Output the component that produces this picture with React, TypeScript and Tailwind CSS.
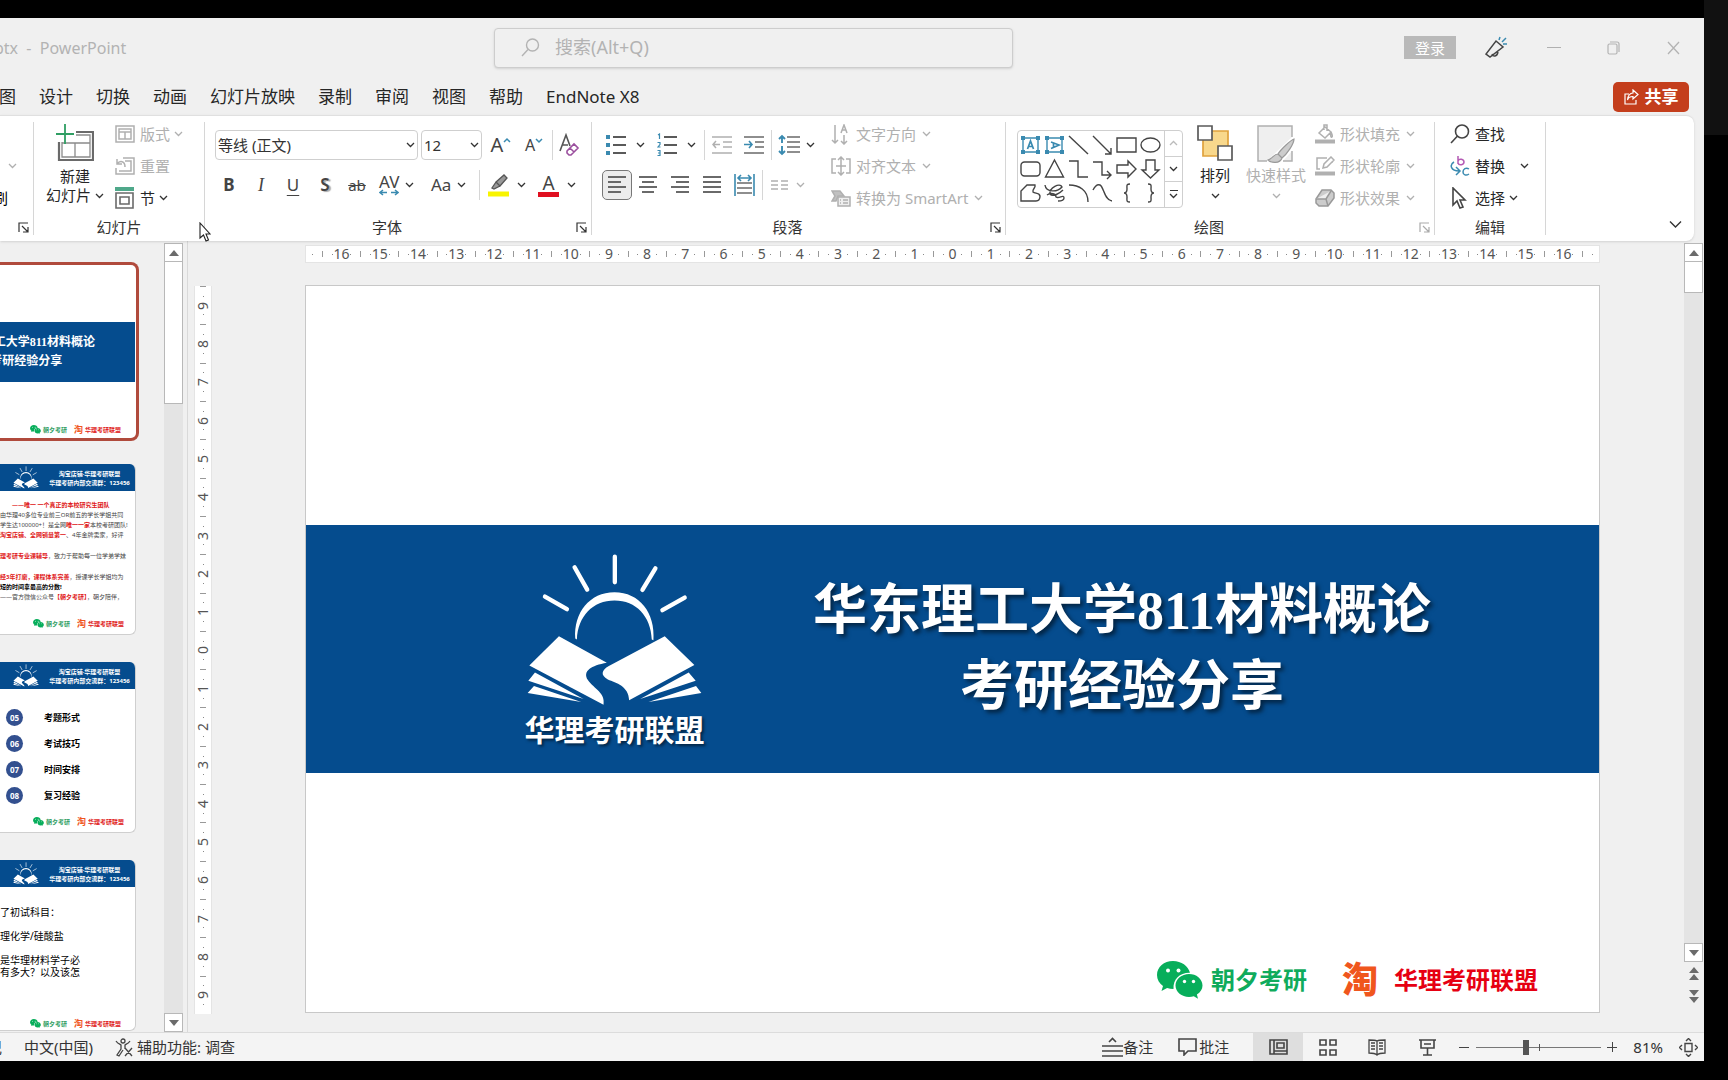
import React from "react";

const UI = "font-['Noto_Sans','Noto_Sans_CJK_SC',sans-serif]";

function Chev({ className = "text-[#333]" }: { className?: string }) {
  return (
    <svg width="9" height="6" viewBox="0 0 9 6" fill="none" stroke="currentColor" strokeWidth="1.3" className={"shrink-0 " + className} aria-hidden="true">
      <path d="M1 1l3.5 3.5L8 1" />
    </svg>
  );
}

function Launcher({ dim = false }: { dim?: boolean }) {
  return (
    <button aria-label="更多选项" className={dim ? "absolute bottom-2 right-1 text-[#aaa]" : "absolute bottom-2 right-1 text-[#333]"}>
      <svg width="11" height="11" viewBox="0 0 11 11" fill="none" stroke="currentColor" strokeWidth="1.2" className="block">
        <path d="M1 10V1h9M4 4l5.5 5.5M10 5v5H5" />
      </svg>
    </button>
  );
}

function Sep() {
  return <div className="my-1.5 w-px shrink-0 bg-[#d6d6d6]" />;
}

function ShortSep({ className }: { className: string }) {
  return <div className={"h-[30px] w-px shrink-0 bg-[#d6d6d6] " + className} />;
}

function Group({ label, className, launcher, children }: { label: string; className: string; launcher?: "on" | "dim"; children: React.ReactNode }) {
  return (
    <section aria-label={label || "剪贴板"} className={"relative flex shrink-0 flex-col pt-0.5 " + className}>
      <div className="flex h-[97px]">{children}</div>
      <div className={"flex h-6 items-center justify-center text-[15px] text-[#333] " + (launcher ? "pr-[22px]" : "")}>{label}</div>
      {launcher && <Launcher dim={launcher === "dim"} />}
    </section>
  );
}

function RowBtn({ icon, text, dim, chev = true, chevGap = "ml-1.5" }: { icon: React.ReactNode; text: string; dim?: boolean; chev?: boolean; chevGap?: string }) {
  return (
    <button className={dim ? "flex h-8 items-center whitespace-nowrap text-[15px] text-[#b0b0b0]" : "flex h-8 items-center whitespace-nowrap text-[15px] text-[#262626]"}>
      <span className="mr-1 flex w-[21px] shrink-0 items-center">{icon}</span>
      {text}
      {chev && <Chev className={chevGap + (dim ? " text-[#b0b0b0]" : " text-[#333]")} />}
    </button>
  );
}

function Picker({ label, value, className }: { label: string; value: string; className: string }) {
  return (
    <span className={"relative h-[30px] shrink-0 " + className}>
      <select aria-label={label} defaultValue={value} className="h-full w-full appearance-none rounded-[4px] border border-[#cfcfcf] bg-white pl-0.5 text-[15px] text-[#333]">
        <option>{value}</option>
      </select>
      <span className="pointer-events-none absolute inset-y-0 right-[3px] flex items-center">
        <Chev />
      </span>
    </span>
  );
}

function Lines({ rows, x2 = 20, color = "#5a5a5a" }: { rows: number[][]; x2?: number; color?: string }) {
  return (
    <svg width={x2} height="22" viewBox={`0 0 ${x2} 22`} stroke={color} strokeWidth="1.8" aria-hidden="true">
      {rows.map(([a, b, y]) => (
        <path key={y} d={`M${a} ${y}H${b}`} />
      ))}
    </svg>
  );
}

function Emblem({ className }: { className: string }) {
  return (
    <svg viewBox="130 95 550 470" className={className} aria-hidden="true">
      <g stroke="#fff" strokeWidth="13" strokeLinecap="round">
        <path d="M406 111v77M285 143l38 67M528 146l-39 65M196 231l66 38M616 234l-67 38" />
      </g>
      <g fill="#fff">
        <path d="M287 357C282 280 330 218 405 218C480 218 528 280 522 362L517 360C514 290 470 243 405 243C340 243 295 290 292 360Z" />
        <path d="M238 350L382 430C335 438 308 455 325 482C345 510 378 520 372 556L149 438Z" />
        <path d="M556 350L645 437L449 543C448 500 410 490 385 480C362 468 366 452 388 440Z" />
        <path d="M166 459L312 539L146 484ZM163 500L305 548L144 521ZM628 459L649 484L482 539ZM650 500L666 521L507 548Z" />
      </g>
    </svg>
  );
}

function WeChat({ className }: { className: string }) {
  return (
    <svg viewBox="0 0 46 38" className={className} aria-hidden="true">
      <path fill="#07ae5b" d="M16 0C7 0 0 6 0 14c0 4.500 2.300 8.300 6 11l-1.500 5 5.600-3c2 .6 4 .9 6.400.9C16 18 23 11.500 33 11.800 31 5 24.500 0 16 0z" />
      <path fill="#07ae5b" d="M45.500 24.500c0-6.700-6.300-11.500-13.500-11.500s-13.500 5-13.500 11.500S24.800 36 32 36c1.700 0 3.300-.3 4.800-.8l4.200 2.600-1.100-4.300c3.500-2.200 5.600-5.300 5.600-9z" />
      <g fill="#fff">
        <circle cx="11" cy="9.500" r="2" /><circle cx="21.500" cy="9.500" r="2" /><circle cx="27.500" cy="20.500" r="1.700" /><circle cx="36.500" cy="20.500" r="1.700" />
      </g>
    </svg>
  );
}

function HRuler() {
  const n = Array.from({ length: 33 }, (_, i) => Math.abs(i - 16));
  return (
    <div className="flex h-[18px] items-center overflow-hidden border border-[#e4e4e4] bg-white px-1.5 text-sm leading-none text-[#555]">
      <i className="mr-[9px] h-px w-px bg-[#888]" />
      {n.map((v, i) => (
        <div key={i} className="flex flex-1 items-center justify-between">
          <i className="h-1.5 w-px bg-[#999]" />
          <i className="h-px w-px bg-[#888]" />
          <span className="flex w-0 justify-center">{v}</span>
          <i className="h-px w-px bg-[#888]" />
          <i className="w-0" />
        </div>
      ))}
      <i className="h-1.5 w-px bg-[#999]" />
      <i className="ml-[9px] h-px w-px bg-[#888]" />
    </div>
  );
}

function VRuler() {
  const n = Array.from({ length: 19 }, (_, i) => Math.abs(i - 9));
  return (
    <div className="flex w-[18px] shrink-0 flex-col border-x border-[#e4e4e4] bg-white text-sm leading-none text-[#555]">
      {n.map((v, i) => (
        <div key={i} className="flex flex-1 flex-col items-center justify-between">
          <i className="h-px w-1.5 bg-[#999]" />
          <i className="h-px w-px bg-[#888]" />
          <span className="flex h-0 items-center">
            <span className="-rotate-90">{v}</span>
          </span>
          <i className="h-px w-px bg-[#888]" />
          <i className="h-0" />
        </div>
      ))}
    </div>
  );
}

function Tri({ down = false, double = false }: { down?: boolean; double?: boolean }) {
  return (
    <svg width="12" height={double ? 14 : 6} viewBox={double ? "0 0 12 14" : "0 0 12 6"} fill="#6b6b6b" className={down ? "rotate-180" : ""} aria-hidden="true">
      <path d={double ? "M6 0l5 6H1zM6 7l5 6H1z" : "M6 0l5 6H1z"} />
    </svg>
  );
}

function ScrollBox({ down = false }: { down?: boolean }) {
  return (
    <button aria-label={down ? "向下滚动" : "向上滚动"} className="flex h-[19px] shrink-0 items-center justify-center border border-[#b8b8b8] bg-white">
      <Tri down={down} />
    </button>
  );
}

function ThumbFooter({ className }: { className: string }) {
  return (
    <div className={"flex items-center justify-end text-[6px] font-bold leading-none " + className}>
      <WeChat className="h-[9px] w-[11px]" />
      <span className="ml-0.5 text-[#2f9e63]">朝夕考研</span>
      <span className="ml-[7px] text-[9px] text-[#f0561d]">淘</span>
      <span className="ml-0.5 text-[#e01818]">华理考研联盟</span>
    </div>
  );
}

function Thumb({ children, foot }: { children: React.ReactNode; foot: string }) {
  return (
    <div className="mb-[27px] flex h-[171px] w-[136px] shrink-0 flex-col overflow-hidden rounded-r-md border-b border-r border-[#cfcfcf] bg-white">
      <div className="flex h-[27px] shrink-0 items-center bg-[#054c8e] pl-3 text-white">
        <Emblem className="h-[23px] w-[28px] shrink-0" />
        <div className="ml-1 flex flex-1 flex-col items-center gap-[3px] whitespace-nowrap pt-0.5 text-[6px] font-bold leading-none">
          <span>淘宝店铺·华理考研联盟</span>
          <span>华理考研内部交流群：123456</span>
        </div>
      </div>
      <div className="flex-1 overflow-hidden text-black">{children}</div>
      <ThumbFooter className={"shrink-0 " + foot} />
    </div>
  );
}

const R = ({ children }: { children: React.ReactNode }) => <b className="text-[#e01818]">{children}</b>;

function Thumbs() {
  return (
    <div className="flex flex-1 flex-col items-start overflow-hidden pt-[21px]">
      <div className="mb-[23px] flex h-[179px] w-[139px] shrink-0 flex-col overflow-hidden rounded-r-lg border-y-[3px] border-r-[3px] border-[#b04a3c] bg-white pr-px">
        <div className="mt-[57px] flex h-[60px] shrink-0 items-center justify-end bg-[#054c8e] pr-10 text-center font-['Liberation_Serif','Noto_Sans_CJK_SC',serif] text-xs font-bold leading-[19px] text-white">
          <div className="shrink-0 whitespace-nowrap">
            华东理工大学811材料概论
            <br />
            考研经验分享
          </div>
        </div>
        <div className="flex-1" />
        <ThumbFooter className="mb-1 pr-3.5" />
      </div>
      <Thumb foot="mb-1.5 pr-[11px]">
        <div className="whitespace-nowrap pt-[9px] text-[6px] leading-[10px] text-[#444]">
          <p className="pl-3"><R>——唯一 一个真正的本校研究生团队</R></p>
          <p>由华理40多位专业前三OR前五的学长学姐共同</p>
          <p>学生达100000+！是全网<R>唯一一家</R>本校考研团队!</p>
          <p><R>淘宝店铺、全网销量第一</R>、4年金牌卖家，好评</p>
          <p className="mt-[11px]"><R>理考研专业课辅导</R>，致力于帮助每一位学弟学妹</p>
          <p className="mt-[11px]"><R>经3年打磨，课程体系完善</R>，授课学长学姐均为</p>
          <p><b className="text-black">短的时间拿最高的分数!</b></p>
          <p>——官方微信公众号<R>【朝夕考研】</R>，朝夕陪伴，</p>
        </div>
      </Thumb>
      <Thumb foot="mb-1.5 pr-[11px]">
        <div className="flex flex-col gap-[9px] pl-1.5 pt-5 text-[9px] font-bold leading-none">
          {[["05", "考题形式"], ["06", "考试技巧"], ["07", "时间安排"], ["08", "复习经验"]].map(([n, t]) => (
            <div key={n} className="flex items-center">
              <span className="flex h-[17px] w-[17px] items-center justify-center rounded-full bg-[#33508f] text-[8px] text-white">{n}</span>
              <span className="ml-[21px]">{t}</span>
            </div>
          ))}
        </div>
      </Thumb>
      <Thumb foot="mb-0.5 pr-3.5">
        <div className="whitespace-nowrap pt-[19px] text-[10px] leading-3">
          <p>了初试科目：</p>
          <p className="mt-3">理化学/硅酸盐</p>
          <p className="mt-3">是华理材料学子必</p>
          <p>有多大？以及该怎</p>
        </div>
      </Thumb>
    </div>
  );
}

function Gallery() {
  const s = { fill: "none", stroke: "#444", strokeWidth: 1.4 };
  const b = "#3a8ab0";
  const box = (
    <>
      <path d="M3 4h15v14H3z" stroke={b} />
      <path d="M1 2h4v4H1zM16 2h4v4h-4zM1 16h4v4H1zM16 16h4v4h-4z" fill={b} stroke="none" />
    </>
  );
  const shapes: React.ReactNode[] = [
    <>{box}<path d="M7.500 15l3-8 3 8M8.500 12.500h4" stroke={b} strokeWidth="1.700" /></>,
    <>{box}<path d="M7 8l8 3-8 3.500M9.500 9v4.500" stroke={b} strokeWidth="1.700" /></>,
    <path d="M1 2l19 18" />,
    <path d="M1 2l18 18M19 14v6h-6" />,
    <path d="M1 4h19v14H1z" />,
    <ellipse cx="10.500" cy="11" rx="9.500" ry="7" />,
    <rect x="1" y="4" width="19" height="14" rx="3.500" />,
    <path d="M10.500 2L19.500 19h-18z" />,
    <path d="M1 3h9v16h10" />,
    <path d="M1 4h9v13h9M15 13l4 4-4 4" />,
    <path d="M1 7h11V3l8 8-8 8v-4H1z" />,
    <path d="M6 2h9v10h4l-8.500 8L2 12h4z" />,
    <path d="M7 3h8c1 3-3 4-2 7 2 2 6 0 7 4 0 4-2 5-4 5H1V9z" />,
    <path d="M1 3c1 8 13 7 17 2-2-5-13 1-12 7 3 4 11-2 13-4M3 13c4-3 9-1 9 2 3 2 8-3 8 1 0 3-4 3-6 3" />,
    <path d="M1 3c10 0 19 5 19 17" />,
    <path d="M1 8c2-4 4-6 7-5 4 2 4 15 12 16" />,
    <path d="M14 2c-4 0-3 2-3 5 0 3-1 4-3 4 2 0 3 1 3 4 0 3-1 5 3 5" />,
    <path d="M8 2c4 0 3 2 3 5 0 3 1 4 3 4-2 0-3 1-3 4 0 3 1 5-3 5" />,
  ];
  return (
    <div className="ml-[11px] mt-3 flex h-[78px] w-[166px] shrink-0 overflow-hidden rounded-[4px] border border-[#cfcfcf]">
      <div className="grid flex-1 grid-cols-6 content-center gap-y-0.5 pl-0.5">
        {shapes.map((c, i) => (
          <svg key={i} width="21" height="22" viewBox="0 0 21 22" {...s}>{c}</svg>
        ))}
      </div>
      <div className="flex w-[18px] flex-col divide-y divide-[#cfcfcf] border-l border-[#cfcfcf]">
        <button aria-label="上一行" className="flex flex-1 items-center justify-center"><Chev className="rotate-180 text-[#bbb]" /></button>
        <button aria-label="下一行" className="flex flex-1 items-center justify-center"><Chev /></button>
        <button aria-label="其他形状" className="flex flex-1 flex-col items-center justify-center gap-0.5"><i className="h-px w-2 bg-[#333]" /><Chev /></button>
      </div>
    </div>
  );
}

function Ribbon() {
  const g = { fill: "none", stroke: "#6a6a6a", strokeWidth: 1.6 };
  const d = { fill: "none", stroke: "#b0b0b0", strokeWidth: 1.5 };
  const bl = "#3a8ab0";
  return (
    <div className="relative mr-2.5 flex h-[126px] shrink-0 rounded-r-lg border-t border-[#e0e0e0] bg-white shadow-sm">
      <Group label="" className="w-[33px]" launcher="on">
        <div className="flex flex-col pt-8">
          <button aria-label="复制选项" className="flex h-8 items-center pl-2"><Chev className="text-[#b0b0b0]" /></button>
          <button aria-label="格式刷" className="flex h-8 w-2 items-center justify-end overflow-hidden text-[15px]"><span className="shrink-0">刷</span></button>
        </div>
      </Group>
      <Sep />
      <Group label="幻灯片" className="w-[170px]">
        <button className="ml-3 flex w-[58px] flex-col items-center pt-[5px] text-[15px] leading-[19px] text-[#262626]">
          <svg width="38" height="40" viewBox="0 0 38 40" fill="none">
            <path d="M20 9h17v28H3V19" stroke="#6a6a6a" strokeWidth="2.200" />
            <path d="M20 12h14v22H6V19M6 20h28M19 20v14" stroke="#8a8a8a" strokeWidth="1.300" />
            <path d="M9 1v20M0 11h18" stroke="#2f9e63" strokeWidth="1.800" />
          </svg>
          <span className="mt-1">新建</span>
          <span className="flex items-center gap-1 whitespace-nowrap">幻灯片<Chev /></span>
        </button>
        <div className="ml-[11px] flex flex-col">
          <RowBtn dim text="版式" chevGap="ml-1" icon={<svg width="20" height="18" viewBox="0 0 20 18" {...d}><path d="M1 1h18v16H1zM4 4h12v10H4zM4 7h12M10 7v7" /></svg>} />
          <RowBtn dim chev={false} text="重置" icon={<svg width="20" height="18" viewBox="0 0 20 18" {...d}><path d="M8 1h11v16H1v-6M10 4h6v10H4M2 2v5h5M2 7c3-4 8-3 8 3" /></svg>} />
          <RowBtn text="节" chevGap="ml-1" icon={<svg width="20" height="22" viewBox="0 0 20 22" {...g}><path d="M0 2h19" stroke="#4fa88a" strokeWidth="4" /><path d="M1 6h17v15H1z" /><path d="M5 10h9v7H5z" /></svg>} />
        </div>
      </Group>
      <Sep />
      <Group label="字体" className="w-[386px]" launcher="on">
        <div className="flex flex-col gap-2.5 pt-3 text-[#444]">
          <div className="flex items-center pl-2.5">
            <Picker label="字体" value="等线 (正文)" className="w-[203px]" />
            <Picker label="字号" value="12" className="ml-[3px] w-[61px]" />
            <button aria-label="增大字号" className="flex h-[30px] w-[38px] items-center justify-center text-xl">A<svg width="8" height="16" viewBox="0 0 8 16" fill="none" stroke={bl} strokeWidth="1.500"><path d="M1 5l3-3 3 3" /></svg></button>
            <button aria-label="减小字号" className="flex h-[30px] w-7 items-center justify-center text-base">A<svg width="8" height="16" viewBox="0 0 8 16" fill="none" stroke={bl} strokeWidth="1.500"><path d="M1 2l3 3 3-3" /></svg></button>
            <ShortSep className="ml-1" />
            <button aria-label="清除格式" className="ml-1 flex h-[30px] w-6 items-center justify-center">
              <svg width="22" height="24" viewBox="0 0 22 24" fill="none" stroke="#555" strokeWidth="1.600"><path d="M2 18L8 2l4 11M4 12h6" /><path d="M9 18l7-7 4 4-7 7h-2l-2-2zM12 15l4 4" stroke="#9b4f9e" /></svg>
            </button>
          </div>
          <div className="flex h-[30px] items-center pl-2">
            <button aria-label="加粗" className="w-8 text-[17px] font-bold">B</button>
            <button aria-label="倾斜" className="w-8 font-['Liberation_Serif',serif] text-[18px] italic">I</button>
            <button aria-label="下划线" className="w-8 text-[17px] underline underline-offset-4">U</button>
            <button aria-label="文字阴影" className="w-8 text-[17px] font-semibold [text-shadow:2px_1px_1px_#aaa]">S</button>
            <button aria-label="删除线" className="w-8 text-[15px] line-through">ab</button>
            <button aria-label="字符间距" className="flex w-[46px] items-center gap-1.5 pl-1.5">
              <span className="flex flex-col items-center text-[17px] leading-[15px]">AV
                <svg width="20" height="7" viewBox="0 0 20 7" fill="none" stroke={bl} strokeWidth="1.500"><path d="M1 3.500h7M12 3.500h7M4 1L1 3.500 4 6M16 1l3 2.500L16 6" /></svg>
              </span>
              <Chev />
            </button>
            <button aria-label="更改大小写" className="flex w-[54px] items-center gap-1.5 pl-3 text-[17px]">Aa<Chev /></button>
            <ShortSep className="ml-1.5" />
            <button aria-label="突出显示颜色" className="ml-2 flex items-center gap-2">
              <svg width="21" height="24" viewBox="0 0 21 24" fill="none"><path d="M0 18.500h21v5H0z" fill="#f8f400" /><path d="M8 9l8-7 3 3-7 8zM8 9l-4 6 2 1 6-3" fill="#999" stroke="#555" strokeWidth="1.300" /></svg>
              <Chev />
            </button>
            <button aria-label="字体颜色" className="ml-3 flex items-center gap-2">
              <span className="flex w-[21px] flex-col items-center text-[19px] leading-[18px]">A<i className="h-[5px] w-full bg-[#e01020]" /></span>
              <Chev />
            </button>
          </div>
        </div>
      </Group>
      <Sep />
      <Group label="段落" className="w-[413px]" launcher="on">
        <div className="flex w-[227px] flex-col gap-2.5 pt-3">
          <div className="flex h-[30px] items-center pl-3.5">
            <button aria-label="项目符号" className="flex items-center gap-2.5">
              <svg width="20" height="22" viewBox="0 0 20 22" strokeWidth="1.800"><path d="M7 3h13M7 11h13M7 19h13" stroke="#5a5a5a" /><path d="M0 1h4v4H0zM0 9h4v4H0zM0 17h4v4H0z" fill={bl} /></svg><Chev />
            </button>
            <button aria-label="编号" className="ml-3 flex items-center gap-2.5">
              <svg width="20" height="24" viewBox="0 0 20 24" strokeWidth="1.800" fill="none"><path d="M7 4h13M7 12h13M7 20h13" stroke="#5a5a5a" /><path d="M1 2l1.500-1v5M.5 9.500h2.500v2l-2 2.500h2.500M.5 17.500H3v5H.5M1 20h2" stroke={bl} strokeWidth="1.200" /></svg><Chev />
            </button>
            <ShortSep className="ml-2" />
            <button aria-label="减少缩进" className="ml-[7px]"><svg width="20" height="20" viewBox="0 0 20 20" {...d}><path d="M0 2h20M11 7h9M11 12h9M0 18h20M8 9.500H1M4 6L1 9.500 4 13" /></svg></button>
            <button aria-label="增加缩进" className="ml-3"><svg width="20" height="20" viewBox="0 0 20 20" {...g}><path d="M0 2h20M11 7h9M11 12h9M0 18h20" /><path d="M0 9.500h8M5 6l3 3.500L5 13" stroke={bl} /></svg></button>
            <ShortSep className="ml-[7px]" />
            <button aria-label="行距" className="ml-1.5 flex items-center gap-1.5">
              <svg width="22" height="22" viewBox="0 0 22 22" {...g}><path d="M9 3h13M9 8h13M9 13h13M9 18h13" /><path d="M4 2v7M1 5l3-3 3 3M4 12v8M1 17l3 3 3-3" stroke={bl} strokeWidth="1.900" /></svg><Chev />
            </button>
          </div>
          <div className="flex h-[30px] items-center pl-2.5">
            <button aria-label="左对齐" className="flex h-[30px] w-[30px] items-center justify-center rounded-[5px] border border-[#777] bg-[#ececec]"><Lines rows={[[1, 19, 3], [1, 14, 8], [1, 19, 13], [1, 14, 18]]} /></button>
            <button aria-label="居中" className="flex w-8 justify-center"><Lines rows={[[1, 19, 3], [4, 16, 8], [1, 19, 13], [4, 16, 18]]} /></button>
            <button aria-label="右对齐" className="flex w-8 justify-center"><Lines rows={[[1, 19, 3], [6, 19, 8], [1, 19, 13], [6, 19, 18]]} /></button>
            <button aria-label="两端对齐" className="flex w-8 justify-center"><Lines rows={[[1, 19, 3], [1, 19, 8], [1, 19, 13], [1, 19, 18]]} /></button>
            <button aria-label="分散对齐" className="flex w-8 justify-center"><svg width="21" height="24" viewBox="0 0 21 24" {...g}><path d="M3 10h15M3 15h15M3 20h15" /><path d="M1 1v22M20 1v22M4 5h13M7 2L4 5l3 3M14 2l3 3-3 3" stroke={bl} /></svg></button>
            <ShortSep className="ml-0.5" />
            <button aria-label="分栏" className="ml-2 flex items-center gap-2"><svg width="17" height="12" viewBox="0 0 17 12" {...d}><path d="M0 2h7M10 2h7M0 6h7M10 6h7M0 10h7M10 10h7" /></svg><Chev className="text-[#b0b0b0]" /></button>
          </div>
        </div>
        <div className="ml-3 flex flex-col">
          <RowBtn dim text="文字方向" icon={<svg width="19" height="21" viewBox="0 0 19 21" {...d}><path d="M4 1v18M1 16l3 3 3-3M10 9l3-8 3 8M11 6h4M13 11v9M10 17l3 3 3-3" /></svg>} />
          <RowBtn dim text="对齐文本" icon={<svg width="20" height="20" viewBox="0 0 20 20" {...d}><path d="M5 3H1v14h4M15 3h4v14h-4M10 1v18M7 4l3-3 3 3M7 16l3 3 3-3M5 10h10" /></svg>} />
          <RowBtn dim text="转换为 SmartArt" icon={<svg width="20" height="17" viewBox="0 0 20 17" {...d}><path d="M1 1h8l4 5H7l-2 5H1l3-5z" fill="#c0c0c0" /><path d="M7 7h12v9H7zM9 10h1M12 10h5M9 13h1M12 13h5" fill="#eee" /></svg>} />
        </div>
      </Group>
      <Sep />
      <Group label="绘图" className="w-[428px]" launcher="dim">
        <Gallery />
        <button className="ml-2 flex w-12 flex-col items-center pt-[7px] text-[15px] leading-[19px] text-[#262626]">
          <svg width="36" height="37" viewBox="0 0 36 37" strokeWidth="1.700"><path d="M6 6h25v25H6z" fill="#f8d88c" stroke="#e0a23c" /><path d="M1 1h14v14H1zM21 21h14v14H21z" fill="#fff" stroke="#5a5a5a" /></svg>
          <span className="mt-1">排列</span>
          <Chev className="mt-2 text-[#333]" />
        </button>
        <button className="ml-1.5 flex w-[62px] flex-col items-center pt-[7px] text-[15px] leading-[19px] text-[#b0b0b0]">
          <svg width="38" height="38" viewBox="0 0 38 38" fill="none"><path d="M10 36H1V1h34v11M35 26v10h-9" fill="#efefef" stroke="#b0b0b0" strokeWidth="1.500" /><path d="M37 14c-3 1-13 10-16 15l4 4c5-4 12-14 12-19zM21 29c-4 0-5 4-10 6 3 3 12 4 14-2z" fill="#ccc" stroke="#999" strokeWidth="1.200" /></svg>
          <span className="mt-[3px] whitespace-nowrap">快速样式</span>
          <Chev className="mt-2 text-[#b0b0b0]" />
        </button>
        <div className="ml-2 flex flex-col">
          <RowBtn dim text="形状填充" icon={<svg width="20" height="20" viewBox="0 0 20 20" {...d}><path d="M4 9l6-6 6 5-6 6zM9 6V1h3v6M16 8c1 2 2 4 1 5s-2-2-1-5" /><path d="M0 17.500h20" strokeWidth="4" /></svg>} />
          <RowBtn dim text="形状轮廓" icon={<svg width="20" height="20" viewBox="0 0 20 20" {...d}><path d="M12 2H2v11h3M17 6v1M8 12l1-4 7-7 3 3-7 7z" /><path d="M0 17.500h20" strokeWidth="4" /></svg>} />
          <RowBtn dim text="形状效果" icon={<svg width="20" height="18" viewBox="0 0 20 18" {...d} stroke="#999"><path d="M1 10L7 1h9l3 3v5l-6 8H4l-3-3z" fill="#ccc" /><path d="M1 10h10l5-8M11 10l2 7" fill="#eee" /></svg>} />
        </div>
      </Group>
      <Sep />
      <Group label="编辑" className="w-[110px]">
        <div className="ml-[15px] flex flex-col">
          <RowBtn text="查找" chev={false} icon={<svg width="20" height="20" viewBox="0 0 20 20" {...g} stroke="#444"><circle cx="12" cy="7.500" r="6.500" /><path d="M7.500 12L1 19" /></svg>} />
          <RowBtn text="替换" chevGap="ml-[15px]" icon={<svg width="20" height="22" viewBox="0 0 20 22" fill="none" strokeWidth="1.500"><path d="M8 1v8M8 6c1-3 6-2 6 1s-5 4-6 1" stroke="#b45ab4" /><path d="M19 14c-3-2-6 0-6 3s3 4 6 2M4 7c-5 3-3 9 5 9M6 12l4 4-4 4" stroke={bl} /></svg>} />
          <RowBtn text="选择" chevGap="ml-1" icon={<svg width="18" height="22" viewBox="0 0 18 22" {...g} stroke="#444"><path d="M3 1v17l4-4 3 7 3-1-3-7h5z" /></svg>} />
        </div>
      </Group>
      <Sep />
      <button aria-label="折叠功能区" className="absolute bottom-3 right-3 text-[#333]">
        <svg width="13" height="9" viewBox="0 0 13 9" fill="none" stroke="currentColor" strokeWidth="1.400" className="block"><path d="M1 1.500l5.500 5.500L12 1.500" /></svg>
      </button>
      <svg width="12" height="20" viewBox="0 0 12 20" className="absolute left-[199px] top-[106px]" fill="#fff" stroke="#222" strokeWidth="1.100" aria-hidden="true">
        <path d="M1 1v15l3.500-3 2.500 6 2.500-1L7 12h4z" />
      </svg>
    </div>
  );
}

function TitleBar() {
  return (
    <header className="flex h-[57px] shrink-0 items-center pt-0.5 text-[#b3b3b3]">
      <div className="flex w-[494px] shrink-0 items-center whitespace-pre text-base">
        <span className="flex w-[18px] justify-end overflow-hidden">ptx</span>
        <span>{"  -  PowerPoint"}</span>
      </div>
      <label className="flex h-10 w-[519px] items-center rounded border border-[#cdcdcd] bg-[#f0f0f0] pl-[26px] shadow-sm">
        <svg width="19" height="19" viewBox="0 0 19 19" fill="none" stroke="currentColor" strokeWidth="1.400"><circle cx="11.500" cy="7" r="6" /><path d="M7 11.500L1 18" /></svg>
        <input aria-label="搜索" placeholder="搜索(Alt+Q)" className="ml-[15px] flex-1 bg-transparent text-[18px] outline-none placeholder:text-[#b3b3b3]" />
      </label>
      <div className="ml-auto flex items-center pr-6">
        <button className="h-[23px] w-[52px] bg-[#b9b9b9] text-[15px] leading-[22px] text-white">登录</button>
        <button aria-label="新功能" className="ml-7">
          <svg width="23" height="24" viewBox="0 0 23 24" fill="none" stroke="#444" strokeWidth="1.500"><path d="M12 5l7 6-13 10-4-3zM8 18c1 3 5 3 6-2" /><path d="M15 4l1-3M18 6l4-4M19 8l4 0" stroke={"#3a8ab0"} /></svg>
        </button>
        <button aria-label="最小化" className="ml-10 flex h-5 w-3.5 items-center"><i className="block h-px w-full bg-[#b0b0b0]" /></button>
        <button aria-label="还原" className="ml-[46px]"><svg width="13" height="14" viewBox="0 0 13 14" fill="none" stroke="currentColor" strokeWidth="1.200"><rect x="1" y="3" width="9" height="10" rx="1.500" /><path d="M3 1h7c1.500 0 2 1 2 2v8" /></svg></button>
        <button aria-label="关闭" className="ml-[47px]"><svg width="13" height="14" viewBox="0 0 13 14" fill="none" stroke="currentColor" strokeWidth="1.300"><path d="M1 1l11 12M12 1L1 13" /></svg></button>
      </div>
    </header>
  );
}

function Tabs() {
  return (
    <nav className="flex h-10 shrink-0 items-center gap-[23px] whitespace-nowrap pt-1 text-[17px] text-[#262626]">
      <button className="flex w-4 justify-end overflow-hidden">绘图</button>
      {["设计", "切换", "动画", "幻灯片放映", "录制", "审阅", "视图", "帮助", "EndNote X8"].map((t) => (
        <button key={t}>{t}</button>
      ))}
      <button className="ml-auto mr-[15px] flex h-[30px] w-[76px] items-center justify-center gap-1.5 rounded-[5px] bg-[#c43e1c] text-[17px] font-bold text-white">
        <svg width="15" height="16" viewBox="0 0 15 16" fill="none" stroke="currentColor" strokeWidth="1.200"><path d="M5 5H1v10h11v-4M9 1l5 4.500L9 10V7.500C6 7.500 4 9 3.500 11 3.500 7 6 4 9 4z" /></svg>
        共享
      </button>
    </nav>
  );
}

function Slide() {
  return (
    <div className="mt-[22px] flex aspect-video w-full flex-col border border-[#c8c8c8] bg-white">
      <div className="flex-[240]" />
      <div className="flex flex-[248] items-center bg-[#054c8e] font-bold text-white">
        <div className="ml-[217px] flex shrink-0 flex-col items-center">
          <Emblem className="h-[157px] w-[183px]" />
          <div className="mt-1 text-[30px] leading-9 [text-shadow:2px_2px_3px_#0008]">华理考研联盟</div>
        </div>
        <h1 className="ml-[107px] whitespace-nowrap text-center font-['Liberation_Serif','Noto_Sans_CJK_SC',serif] text-[54px] leading-[76px] [text-shadow:3px_3px_4px_#0008]">
          华东理工大学811材料概论
          <br />
          考研经验分享
        </h1>
      </div>
      <div className="flex min-h-0 flex-[240] items-end justify-end text-2xl font-bold">
        <div className="mb-3 mr-[61px] flex h-10 items-center">
          <WeChat className="h-[38px] w-[46px]" />
          <span className="ml-2 text-[#10ab5c]">朝夕考研</span>
          <span className="ml-[35px] text-[36px] font-black leading-9 text-[#f0561d]">淘</span>
          <span className="ml-4 text-[#e60012]">华理考研联盟</span>
        </div>
      </div>
    </div>
  );
}

function StatusBar() {
  const k = { fill: "none", stroke: "#444", strokeWidth: 1.6 };
  return (
    <footer className="flex h-[29px] shrink-0 items-center whitespace-nowrap border-t border-[#dcdcdc] bg-[#f4f4f4] text-[15px] text-[#333]">
      <span className="flex w-0.5 justify-end overflow-hidden"><span className="shrink-0">记</span></span>
      <button className="ml-[22px]">中文(中国)</button>
      <button className="ml-[22px] flex items-center gap-[3px]">
        <svg width="19" height="19" viewBox="0 0 19 19" {...k} strokeWidth="1.300"><circle cx="8" cy="3" r="2" /><path d="M1 3c2 3 4 3 5 4v4l-4 6 2 1 4-6M15 3c-2 3-4 3-5 4v4M10 10l7 8M17 10l-7 8" /></svg>
        辅助功能: 调查
      </button>
      <div className="ml-auto flex items-center self-stretch pr-1.5">
        <button className="flex items-center"><svg width="21" height="20" viewBox="0 0 21 20" {...k}><path d="M7 5l3.500-3.500L14 5M0 9h21M0 14h21M0 19h21" /></svg>备注</button>
        <button className="ml-[25px] flex items-center gap-0.5"><svg width="19" height="18" viewBox="0 0 19 18" {...k}><path d="M1 1h17v12H10l-4 4v-4H1z" /></svg>批注</button>
        <button aria-label="普通视图" className="ml-6 flex w-[50px] items-center justify-center self-stretch bg-[#dedede]"><svg width="19" height="16" viewBox="0 0 19 16" {...k}><path d="M1 1h17v14H1zM5 1v14M8 4h7v5H8zM5 12h13" /></svg></button>
        <button aria-label="幻灯片浏览" className="flex w-[50px] justify-center"><svg width="18" height="17" viewBox="0 0 18 17" {...k}><path d="M1 1h6v5H1zM11 1h6v5h-6zM1 11h6v5H1zM11 11h6v5h-6z" /></svg></button>
        <button aria-label="阅读视图" className="flex w-12 justify-center"><svg width="18" height="17" viewBox="0 0 18 17" {...k} strokeWidth="1.300"><path d="M9 2C7 1 4 1 1 1v13c3 0 6 0 8 2 2-2 5-2 8-2V1c-3 0-6 0-8 1v14M3 4h4M3 7h4M3 10h4M11 4h4M11 7h4M11 10h4" /></svg></button>
        <button aria-label="幻灯片放映" className="flex w-[52px] justify-center"><svg width="17" height="17" viewBox="0 0 17 17" {...k}><path d="M0 1h17M2 1v8h13V1M5 5h7M8.500 9v7M4 16h9" /></svg></button>
        <button aria-label="缩小" className="ml-1.5 flex h-5 w-2.5 items-center"><i className="block h-px w-full bg-[#444]" /></button>
        <span className="relative ml-[7px] flex items-center">
          <input type="range" aria-label="显示比例" min={10} max={190} defaultValue={81} className="h-5 w-[125px] appearance-none bg-transparent [&::-webkit-slider-runnable-track]:h-px [&::-webkit-slider-runnable-track]:bg-[#777] [&::-webkit-slider-thumb]:-mt-[7px] [&::-webkit-slider-thumb]:h-[15px] [&::-webkit-slider-thumb]:w-1.5 [&::-webkit-slider-thumb]:appearance-none [&::-webkit-slider-thumb]:bg-[#555]" />
          <i className="pointer-events-none absolute left-1/2 h-[7px] w-px bg-[#555]" />
        </span>
        <button aria-label="放大" className="ml-1.5"><svg width="10" height="10" viewBox="0 0 10 10" className="block" stroke="#444"><path d="M0 5.500h10M5.500 0v10" /></svg></button>
        <button className="ml-4 text-[15px]">81%</button>
        <button aria-label="适应窗口" className="ml-4"><svg width="19" height="19" viewBox="0 0 19 19" {...k} strokeWidth="1.400"><path d="M6 5.500h7v8H6zM7 3l2.500-2.500L12 3M7 16l2.500 2.500L12 16M3 7L.5 9.500 3 12M16 7l2.500 2.500L16 12" /></svg></button>
      </div>
    </footer>
  );
}

export default function App() {
  return (
    <div className={"flex h-screen overflow-hidden bg-black pb-[19px] " + UI}>
      <div className="mt-[18px] flex min-w-0 flex-1 flex-col overflow-hidden bg-[#f0f0f0]">
        <TitleBar />
        <Tabs />
        <Ribbon />
        <main className="flex min-h-0 flex-1">
          <div className="flex w-[188px] shrink-0 overflow-hidden border-r border-[#d9d9d9] pr-1">
            <Thumbs />
            <div className="mt-0.5 flex w-[19px] flex-col bg-[#e4e4e4]">
              <ScrollBox />
              <div className="h-[142px] border-x border-b border-[#b8b8b8] bg-white" />
              <div className="flex-1" />
              <ScrollBox down />
            </div>
          </div>
          <div className="flex min-w-0 flex-1">
            <div className="flex pb-[18px] pl-1.5 pt-[45px]">
              <VRuler />
            </div>
            <div className="ml-[93px] mr-[84px] min-w-0 flex-1 pt-1">
              <HRuler />
              <Slide />
            </div>
          </div>
          <div className="mr-px mt-0.5 flex w-[19px] shrink-0 flex-col bg-[#e4e4e4]">
            <ScrollBox />
            <div className="h-[31px] border-x border-b border-[#b8b8b8] bg-white" />
            <div className="flex-1" />
            <ScrollBox down />
            <div className="flex h-[70px] flex-col items-center gap-2 bg-[#f0f0f0] pt-[5px]">
              <button aria-label="上一张幻灯片"><Tri double /></button>
              <button aria-label="下一张幻灯片"><Tri double down /></button>
            </div>
          </div>
        </main>
        <StatusBar />
      </div>
      <div className="h-[135px] w-6 shrink-0 bg-[#111]" />
    </div>
  );
}
